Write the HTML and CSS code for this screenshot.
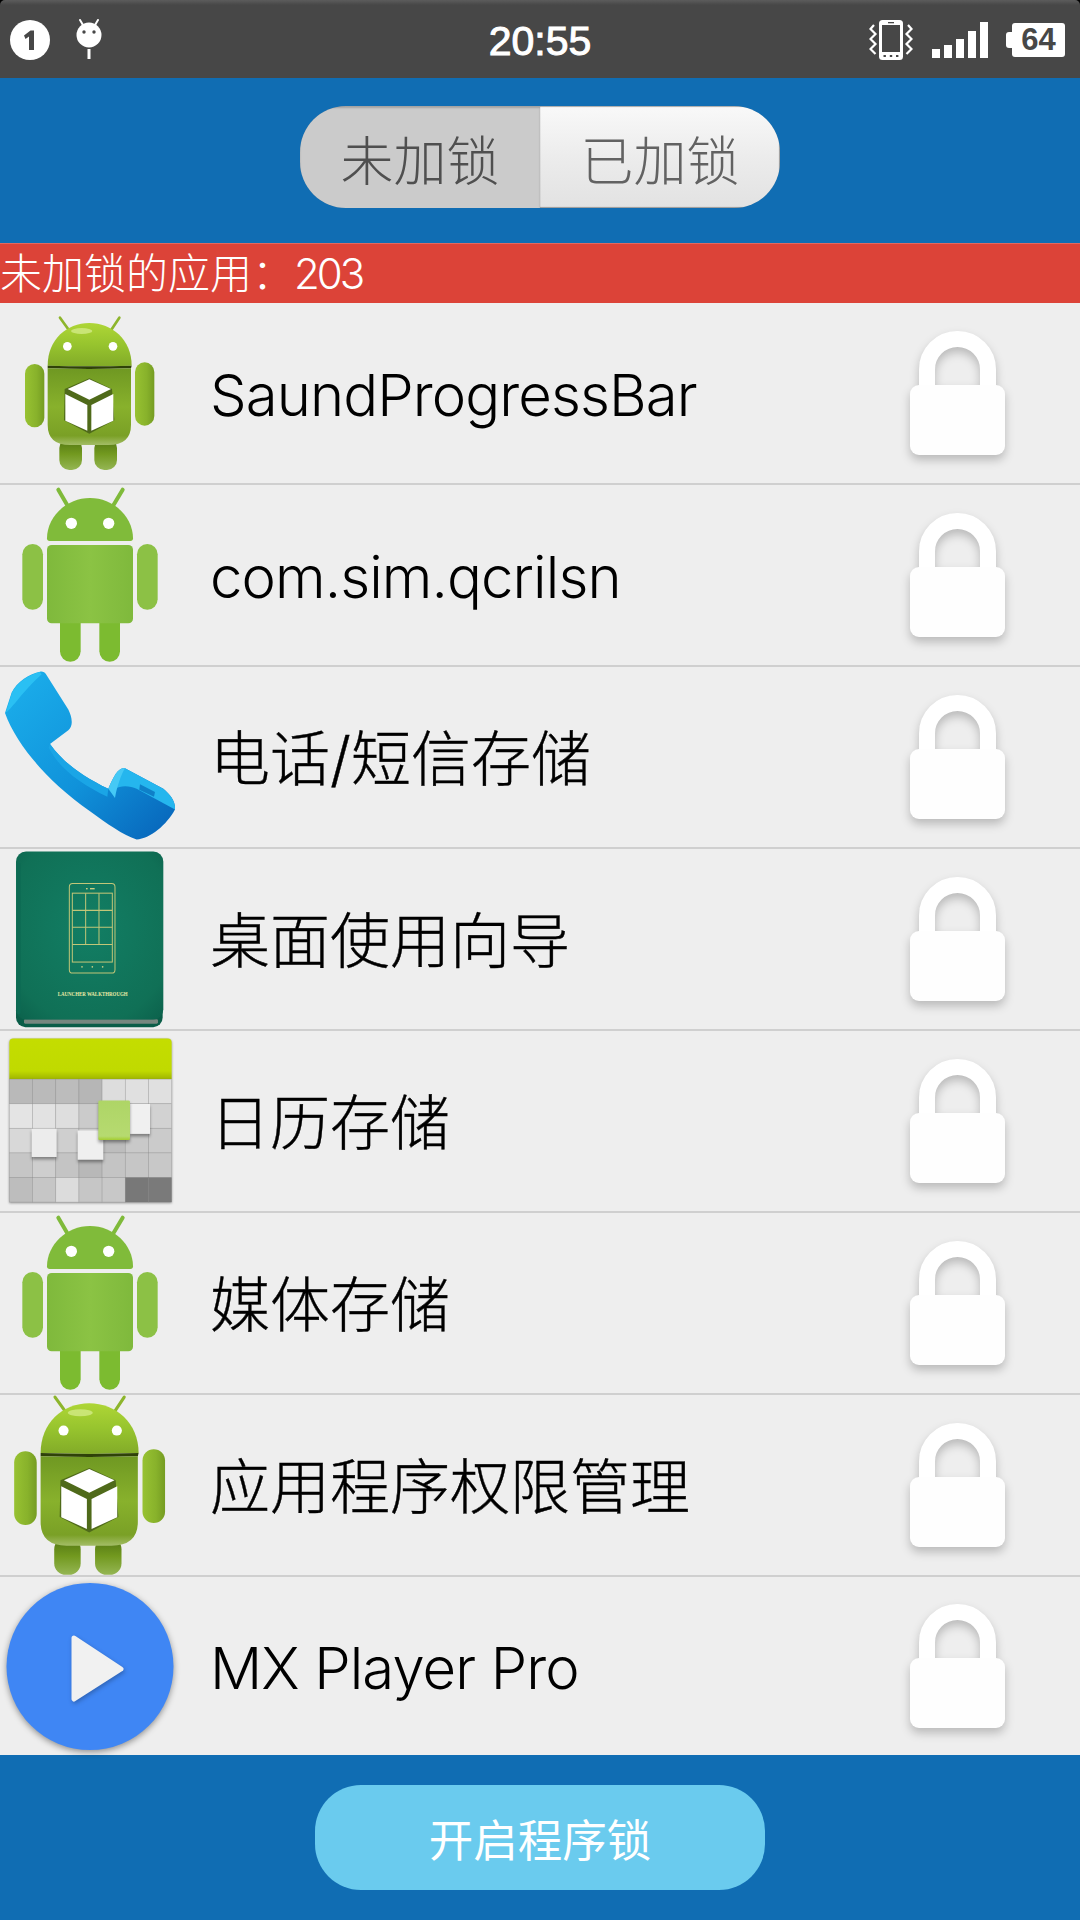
FILE: index.html
```html
<!DOCTYPE html>
<html lang="zh">
<head>
<meta charset="utf-8">
<title>程序锁</title>
<link rel="stylesheet" href="styles.css">
</head>
<body>
<svg class="defs" aria-hidden="true">
  <defs>
    <linearGradient id="domeG" x1="0" y1="0" x2="0" y2="1"><stop offset="0" stop-color="#aed636"/><stop offset=".5" stop-color="#97c42e"/><stop offset="1" stop-color="#82ab28"/></linearGradient>
    <linearGradient id="bodyG" x1="0" y1="0" x2="0" y2="1"><stop offset="0" stop-color="#6f9822"/><stop offset=".5" stop-color="#88b12c"/><stop offset=".88" stop-color="#7aa026"/><stop offset="1" stop-color="#a3bd66"/></linearGradient>
    <linearGradient id="armG" x1="0" y1="0" x2="1" y2="0"><stop offset="0" stop-color="#98c232"/><stop offset=".6" stop-color="#88b22b"/><stop offset="1" stop-color="#759c22"/></linearGradient>
    <linearGradient id="legG" x1="0" y1="0" x2="0" y2="1"><stop offset="0" stop-color="#4f7312"/><stop offset=".5" stop-color="#72991f"/><stop offset="1" stop-color="#95b654"/></linearGradient>
    <linearGradient id="flatG" x1="0" y1="0" x2="1" y2="0"><stop offset="0" stop-color="#7fb93c"/><stop offset=".5" stop-color="#8bc344"/><stop offset="1" stop-color="#7fb93c"/></linearGradient>
    <linearGradient id="phoneG" x1="0" y1="0" x2="1" y2="1"><stop offset="0" stop-color="#1cb0ec"/><stop offset=".55" stop-color="#1092da"/><stop offset="1" stop-color="#0762b8"/></linearGradient>
    <radialGradient id="bookG" cx=".5" cy=".45" r=".72"><stop offset="0" stop-color="#127e64"/><stop offset=".8" stop-color="#107056"/><stop offset="1" stop-color="#0c634d"/></radialGradient>
    <linearGradient id="calG" x1="0" y1="0" x2="0" y2="1"><stop offset="0" stop-color="#c4dd00"/><stop offset=".8" stop-color="#c0da00"/><stop offset="1" stop-color="#9fb500"/></linearGradient>
    <linearGradient id="greenTile" x1="0" y1="0" x2="0" y2="1"><stop offset="0" stop-color="#aed566"/><stop offset=".9" stop-color="#b6da70"/><stop offset="1" stop-color="#a3cc2e"/></linearGradient>
    <symbol id="droid-cube" viewBox="0 0 540 540">
      <g class="droid-antenna"><line x1="180" y1="44" x2="206" y2="80"/><line x1="358" y1="44" x2="334" y2="80"/></g>
      <rect x="178" y="405" width="68" height="96" rx="30" fill="url(#legG)"/>
      <rect x="283" y="405" width="68" height="96" rx="30" fill="url(#legG)"/>
      <path d="M143 188C143 110 200 60 268 60C336 60 395 110 395 188Q268 192 143 188Z" fill="url(#domeG)"/>
      <ellipse cx="245" cy="84" rx="32" ry="9" fill="#d6ec8c" opacity=".75"/>
      <circle cx="202" cy="130" r="13" fill="#fff"/><circle cx="339" cy="130" r="13" fill="#fff"/>
      <path d="M143 188Q268 192 395 188L393 196Q268 200 143 196Z" fill="#2f4208"/>
      <path d="M143 196Q268 200 393 196L393 365Q393 426 325 426L210 426Q143 426 143 365Z" fill="url(#bodyG)"/>
      <rect x="75" y="183" width="58" height="190" rx="29" fill="url(#armG)"/>
      <rect x="405" y="178" width="58" height="190" rx="29" fill="url(#armG)"/>
      <path d="M268 226L336 258L343 352L268 392L192 352L194 258Z" fill="#4f6a1a"/>
      <path d="M268 229L333 258L268 290L203 258Z" fill="#fff"/>
      <path d="M196 273L262 306L262 383L196 353Z" fill="#fff"/>
      <path d="M274 306L340 273L340 353L274 383Z" fill="#fff"/>
    </symbol>
    <symbol id="droid-flat" viewBox="0 0 540 540">
      <g class="droid-antenna flat"><line x1="175" y1="14" x2="205" y2="66"/><line x1="368" y1="14" x2="337" y2="66"/></g>
      <path d="M141 160C141 95 200 39 270 39C340 39 399 95 399 160Q399 168 391 168L149 168Q141 168 141 160Z" fill="#80bb3a"/>
      <circle cx="214" cy="115" r="17" fill="#fff"/><circle cx="326" cy="115" r="17" fill="#fff"/>
      <rect x="180" y="360" width="62" height="170" rx="31" fill="#7cbb30"/>
      <rect x="298" y="360" width="62" height="170" rx="31" fill="#7cbb30"/>
      <rect x="141" y="180" width="258" height="235" rx="14" fill="url(#flatG)"/>
      <rect x="67" y="177" width="62" height="197" rx="31" fill="#8cc145"/>
      <rect x="411" y="177" width="62" height="197" rx="31" fill="#8cc145"/>
    </symbol>
    <symbol id="lock" viewBox="0 0 120 180">
      <path d="M30 85V65.5A30.5 30.5 0 0 1 91 65.5V85" fill="none" stroke="#fff" stroke-width="16"/>
      <rect x="13" y="81" width="95" height="70" rx="9" fill="#fefefe"/>
    </symbol>
  </defs>
</svg>

<div class="screen">
  <header class="status">
    <div class="status-left">
      <svg class="st-badge" viewBox="0 0 40 40"><circle cx="20" cy="20" r="20" fill="#fff"/><path d="M14 15.500L20.500 10.500H24V30H19V16.500L15.500 19Z" fill="#474747"/></svg>
      <svg class="st-droid" viewBox="0 0 28 42"><path d="M5 1L8 6M23 1L20 6" stroke="#fff" stroke-width="2" stroke-linecap="round"/><circle cx="14" cy="16" r="12.500" fill="#fff"/><circle cx="9" cy="13" r="1.700" fill="#474747"/><circle cx="19" cy="13" r="1.700" fill="#474747"/><rect x="12.500" y="30" width="3" height="10" fill="#fff"/></svg>
    </div>
    <div class="clock">20:55</div>
    <div class="status-right">
      <svg class="st-vibrate" viewBox="0 0 44 40"><rect x="10" y="0" width="24" height="40" rx="3.500" fill="#fff"/><rect x="13" y="5" width="18" height="27" fill="#474747"/><rect x="19" y="2" width="6" height="1.300" fill="#474747"/><rect x="14.500" y="35" width="2.400" height="2" fill="#474747"/><rect x="20.800" y="35" width="2.400" height="2" fill="#474747"/><rect x="27" y="35" width="2.400" height="2" fill="#474747"/><path class="wiggle" d="M5 5L1.500 9L6.500 14L1.500 19L6.500 24L1.500 29L6.500 34M39 5L42.500 9L37.500 14L42.500 19L37.500 24L42.500 29L37.500 34"/></svg>
      <div class="signal"><span class="bar b1"></span><span class="bar b2"></span><span class="bar b3"></span><span class="bar b4"></span><span class="bar b5"></span></div>
      <div class="battery"><span class="nub"></span><span class="level">64</span></div>
    </div>
  </header>

  <section class="tabs">
    <div class="segment">
      <div class="seg seg-on">未加锁</div>
      <div class="seg seg-off">已加锁</div>
    </div>
  </section>

  <div class="count">未加锁的应用：<span class="count-num">203</span></div>

  <main class="list">
    <div class="row">
      <div class="icon-cell"><svg class="icon"><use href="#droid-cube"/></svg></div>
      <div class="name name-latin">SaundProgressBar</div>
      <svg class="lock"><use href="#lock"/></svg>
    </div>
    <div class="row">
      <div class="icon-cell"><svg class="icon"><use href="#droid-flat"/></svg></div>
      <div class="name name-latin">com.sim.qcrilsn</div>
      <svg class="lock"><use href="#lock"/></svg>
    </div>
    <div class="row">
      <div class="icon-cell">
        <svg class="icon icon-blur" viewBox="0 0 180 180">
          <g transform="translate(0 3) scale(.3333 .3444)">
            <path d="M120 5C90 10 50 35 35 65L15 125C50 220 150 330 270 410C320 445 370 480 410 492C450 490 500 450 525 405C527 380 510 362 490 345L375 285C355 282 340 310 325 345C250 310 190 270 150 215L205 175C222 160 215 135 205 115L140 15C135 5 125 3 120 5Z" fill="url(#phoneG)"/>
            <path d="M120 6C90 12 52 36 36 65L18 122C30 120 60 70 125 12Z" fill="#2ac0f3"/>
            <path d="M150 215C190 270 250 310 325 345L322 368C250 335 180 290 146 226Z" fill="#1aa5e6"/>
            <path d="M375 285L490 345C510 362 527 380 525 405L410 345C390 335 360 335 345 345C350 320 360 290 375 285Z" fill="#25b6ee"/>
            <path d="M325 345C340 310 355 282 375 285C365 300 350 340 345 372Z" fill="#45c9f5"/>
            <path d="M420 332L465 354L462 368L418 348Z" fill="#0f80c8"/>
          </g>
        </svg>
      </div>
      <div class="name name-cjk">电话/短信存储</div>
      <svg class="lock"><use href="#lock"/></svg>
    </div>
    <div class="row">
      <div class="icon-cell">
        <svg class="icon" viewBox="0 0 180 180">
          <g transform="translate(0 -179) scale(.3333 .3444)">
            <rect x="48" y="960" width="440" height="77" rx="28" fill="#0a5d48"/>
            <rect x="72" y="1014" width="402" height="13" rx="4" fill="#76877f"/>
            <rect x="48" y="527" width="442" height="488" rx="30" fill="url(#bookG)"/>
            <rect x="50" y="560" width="12" height="440" rx="6" fill="#0d6a53"/>
            <g class="book-lines">
              <rect x="208" y="620" width="137" height="260" rx="10"/>
              <rect x="217" y="648" width="120" height="200"/>
              <path d="M217 698H337M217 747H337M217 797H337M257 648V797M297 648V797"/>
            </g>
            <rect x="270" y="633" width="14" height="4" fill="#c9cd84"/><rect x="258" y="633" width="5" height="4" fill="#c9cd84"/>
            <circle cx="246" cy="862" r="2.500" fill="#c9cd84"/><circle cx="277" cy="862" r="2.500" fill="#c9cd84"/><circle cx="308" cy="862" r="2.500" fill="#c9cd84"/>
            <text class="book-title" x="278" y="947" textLength="210" lengthAdjust="spacingAndGlyphs">LAUNCHER WALKTHROUGH</text>
          </g>
        </svg>
      </div>
      <div class="name name-cjk">桌面使用向导</div>
      <svg class="lock"><use href="#lock"/></svg>
    </div>
    <div class="row">
      <div class="icon-cell">
        <svg class="icon icon-soft" viewBox="0 0 180 180">
          <g transform="translate(0 -361) scale(.3333 .3444)">
            <rect x="28" y="1070" width="487" height="475" rx="12" fill="#c6c6c6"/>
            <path d="M28 1188V1082Q28 1070 40 1070H503Q515 1070 515 1082V1188Z" fill="url(#calG)"/>
            <g class="cal-cells">
              <rect x="28" y="1188" width="69.600" height="71.400" fill="#b9b9b9"/><rect x="97.600" y="1188" width="69.600" height="71.400" fill="#bababa"/><rect x="167.200" y="1188" width="69.600" height="71.400" fill="#bcbcbc"/><rect x="236.800" y="1188" width="69.600" height="71.400" fill="#b6b6b6"/><rect x="306.400" y="1188" width="69.600" height="71.400" fill="#dddddd"/><rect x="376" y="1188" width="69.600" height="71.400" fill="#e0e0e0"/><rect x="445.600" y="1188" width="69.400" height="71.400" fill="#e0e0e0"/>
              <rect x="28" y="1259.400" width="69.600" height="71.400" fill="#e4e4e4"/><rect x="97.600" y="1259.400" width="69.600" height="71.400" fill="#e2e2e2"/><rect x="167.200" y="1259.400" width="69.600" height="71.400" fill="#dedede"/><rect x="236.800" y="1259.400" width="69.600" height="71.400" fill="#cbcbcb"/><rect x="306.400" y="1259.400" width="69.600" height="71.400" fill="#cdcdcd"/><rect x="376" y="1259.400" width="69.600" height="71.400" fill="#d0d0d0"/><rect x="445.600" y="1259.400" width="69.400" height="71.400" fill="#d2d2d2"/>
              <rect x="28" y="1330.800" width="69.600" height="71.400" fill="#d8d8d8"/><rect x="97.600" y="1330.800" width="69.600" height="71.400" fill="#d4d4d4"/><rect x="167.200" y="1330.800" width="69.600" height="71.400" fill="#cfcfcf"/><rect x="236.800" y="1330.800" width="69.600" height="71.400" fill="#cccccc"/><rect x="306.400" y="1330.800" width="69.600" height="71.400" fill="#bdbdbd"/><rect x="376" y="1330.800" width="69.600" height="71.400" fill="#c9c9c9"/><rect x="445.600" y="1330.800" width="69.400" height="71.400" fill="#cbcbcb"/>
              <rect x="28" y="1402.200" width="69.600" height="71.400" fill="#c6c6c6"/><rect x="97.600" y="1402.200" width="69.600" height="71.400" fill="#cecece"/><rect x="167.200" y="1402.200" width="69.600" height="71.400" fill="#c4c4c4"/><rect x="236.800" y="1402.200" width="69.600" height="71.400" fill="#b8b8b8"/><rect x="306.400" y="1402.200" width="69.600" height="71.400" fill="#c4c4c4"/><rect x="376" y="1402.200" width="69.600" height="71.400" fill="#c6c6c6"/><rect x="445.600" y="1402.200" width="69.400" height="71.400" fill="#c8c8c8"/>
              <rect x="28" y="1473.600" width="69.600" height="71.400" fill="#bdbdbd"/><rect x="97.600" y="1473.600" width="69.600" height="71.400" fill="#c6c6c6"/><rect x="167.200" y="1473.600" width="69.600" height="71.400" fill="#dcdcdc"/><rect x="236.800" y="1473.600" width="69.600" height="71.400" fill="#c6c6c6"/><rect x="306.400" y="1473.600" width="69.600" height="71.400" fill="#c8c8c8"/><rect x="376" y="1473.600" width="69.600" height="71.400" fill="#787878"/><rect x="445.600" y="1473.600" width="69.400" height="71.400" fill="#7a7a7a"/>
            </g>
            <g class="cal-raised">
              <rect x="95" y="1332" width="75" height="82" fill="#ececec"/>
              <rect x="233" y="1337" width="77" height="85" fill="#efefef"/>
              <rect x="390" y="1260" width="60" height="87" fill="#f0f0f0"/>
              <rect x="295" y="1250" width="95" height="115" rx="4" fill="url(#greenTile)"/>
            </g>
          </g>
        </svg>
      </div>
      <div class="name name-cjk">日历存储</div>
      <svg class="lock"><use href="#lock"/></svg>
    </div>
    <div class="row">
      <div class="icon-cell"><svg class="icon"><use href="#droid-flat"/></svg></div>
      <div class="name name-cjk">媒体存储</div>
      <svg class="lock"><use href="#lock"/></svg>
    </div>
    <div class="row">
      <div class="icon-cell"><svg class="icon icon-large"><use href="#droid-cube"/></svg></div>
      <div class="name name-cjk">应用程序权限管理</div>
      <svg class="lock"><use href="#lock"/></svg>
    </div>
    <div class="row row-last">
      <div class="icon-cell">
        <svg class="icon icon-play" viewBox="0 0 180 180">
          <circle cx="90" cy="90.500" r="83.500" fill="#3f86f4"/>
          <path class="play-tri" d="M74 62L121 93L74 123Z"/>
        </svg>
      </div>
      <div class="name name-latin">MX Player Pro</div>
      <svg class="lock"><use href="#lock"/></svg>
    </div>
  </main>

  <footer class="footer">
    <div class="start-btn">开启程序锁</div>
  </footer>
</div>
</body>
</html>
```

FILE: styles.css
```css
* { box-sizing: border-box; }

html, body {
  margin: 0;
  padding: 0;
  background: #000;
}

.defs {
  position: absolute;
  width: 0;
  height: 0;
}

.screen {
  width: 1080px;
  height: 1920px;
  display: flex;
  flex-direction: column;
  overflow: hidden;
  font-family: "Liberation Sans", "Noto Sans CJK SC", sans-serif;
}

/* status bar */
.status {
  height: 78px;
  flex: none;
  display: grid;
  grid-template-columns: 1fr auto 1fr;
  align-items: center;
  padding: 0 15px;
  background: linear-gradient(#5c5c5c, #474747 5px);
  border-radius: 5px 5px 0 0;
  color: #fff;
}

.status-left {
  display: flex;
  align-items: center;
  gap: 25px;
  margin-left: -5px;
}

.st-badge { width: 40px; height: 40px; }
.st-droid { width: 28px; height: 42px; }

.clock {
  font-size: 41px;
  line-height: 78px;
  padding-top: 2px;
  -webkit-text-stroke: 1px #fff;
}

.status-right {
  display: flex;
  align-items: center;
  justify-content: flex-end;
  gap: 19px;
}

.st-vibrate { width: 44px; height: 40px; }

.wiggle {
  fill: none;
  stroke: #fff;
  stroke-width: 2.200;
}

.signal {
  display: flex;
  align-items: flex-end;
  gap: 4px;
  height: 36px;
}

.bar {
  width: 8px;
  background: #fff;
}

.b1 { height: 9px; }
.b2 { height: 13px; }
.b3 { height: 19px; }
.b4 { height: 27px; }
.b5 { height: 36px; }

.battery {
  position: relative;
  width: 53px;
  height: 34px;
  border-radius: 3px;
  background: #fff;
  color: #474747;
  margin-left: 5px;
  font-weight: 700;
  font-size: 31px;
  line-height: 34px;
  text-align: center;
}

.nub {
  position: absolute;
  left: -6px;
  top: 9px;
  width: 6px;
  height: 16px;
  border-radius: 3px 0 0 3px;
  background: #fff;
}

/* tabs */
.tabs {
  height: 165px;
  flex: none;
  display: flex;
  justify-content: center;
  padding-top: 28px;
  background: #106db3;
}

.segment {
  width: 480px;
  height: 102px;
  display: flex;
  border-radius: 46px;
  overflow: hidden;
  box-shadow: inset 0 0 0 1px rgba(90, 90, 90, .35);
}

.seg {
  flex: 1;
  display: flex;
  align-items: center;
  justify-content: center;
  padding-top: 2px;
  font-size: 53px;
  font-weight: 300;
}

.seg-on {
  background: #cbcbcb;
  color: #4f4f4f;
  box-shadow: inset 0 2px 2px rgba(0, 0, 0, .2);
}

.seg-off {
  background: linear-gradient(#f9f9f9, #ececec 50%, #e2e2e2);
  color: #626262;
  box-shadow: inset 0 -1px 1px rgba(0, 0, 0, .3), inset 0 1px 1px rgba(0, 0, 0, .3), inset -1px 0 1px rgba(0, 0, 0, .3);
}

/* count */
.count {
  height: 60px;
  flex: none;
  background: #dc4338;
  border-top: 1px solid #e2695f;
  color: #fff;
  font-size: 42px;
  font-weight: 300;
  line-height: 60px;
  white-space: nowrap;
}

.count-num {
  font-family: Inter, sans-serif;
  letter-spacing: -3px;
}

/* list */
.list {
  flex: 1;
  min-height: 0;
  display: flex;
  flex-direction: column;
  background: #eeeeee;
}

.row {
  height: 182px;
  flex: none;
  display: flex;
  align-items: center;
  border-bottom: 2px solid #cfcfcf;
}

.row-last {
  height: 178px;
  border-bottom: 0;
}

.icon-cell {
  width: 180px;
  height: 180px;
  flex: none;
  display: flex;
  align-items: center;
  justify-content: center;
}

.icon {
  width: 180px;
  height: 180px;
  flex: none;
  overflow: visible;
}

.icon-large {
  width: 210px;
  height: 210px;
}

.icon-blur { filter: blur(.4px); }
.icon-soft { filter: blur(.7px) drop-shadow(0 1px 1px rgba(0, 0, 0, .35)); }
.icon-play { filter: drop-shadow(0 2px 3px rgba(0, 0, 0, .4)); }

.play-tri {
  fill: #f1f1f1;
  stroke: #f1f1f1;
  stroke-width: 5;
  stroke-linejoin: round;
  filter: drop-shadow(1px 2px 2px rgba(0, 0, 0, .25));
}

.droid-antenna line {
  stroke: #8db52c;
  stroke-width: 8;
  stroke-linecap: round;
}

.droid-antenna.flat line {
  stroke: #7fba3a;
  stroke-width: 12;
}

.book-lines {
  fill: none;
  stroke: #c2c678;
  stroke-width: 3;
}

.book-title {
  fill: #e9eaa6;
  font-family: "Liberation Serif", serif;
  font-size: 15px;
  font-weight: 700;
  text-anchor: middle;
}

.cal-cells rect {
  stroke: rgba(120, 120, 120, .35);
  stroke-width: 2;
}

.cal-raised rect {
  filter: drop-shadow(0 7px 5px rgba(0, 0, 0, .38));
}

.name {
  flex: 1;
  padding-left: 30px;
  color: #000;
  font-family: Inter, "Noto Sans CJK SC", sans-serif;
  font-weight: 300;
  white-space: nowrap;
}

.name-latin {
  padding-top: 4px;
  font-size: 58px;
  letter-spacing: -.9px;
}

.name-cjk {
  padding-bottom: 6px;
  font-size: 60px;
  -webkit-text-stroke: .4px #000;
}

.lock {
  width: 120px;
  height: 180px;
  flex: none;
  margin: 1px 63px 0 0;
  filter: blur(.3px) drop-shadow(0 5px 5px rgba(0, 0, 0, .22));
}

/* footer */
.footer {
  height: 165px;
  flex: none;
  display: flex;
  justify-content: center;
  padding-top: 30px;
  background: #106db3;
}

.start-btn {
  width: 450px;
  height: 105px;
  display: flex;
  align-items: center;
  justify-content: center;
  border-radius: 46px;
  background: #6acbee;
  color: #fff;
  font-size: 44.500px;
}
```
